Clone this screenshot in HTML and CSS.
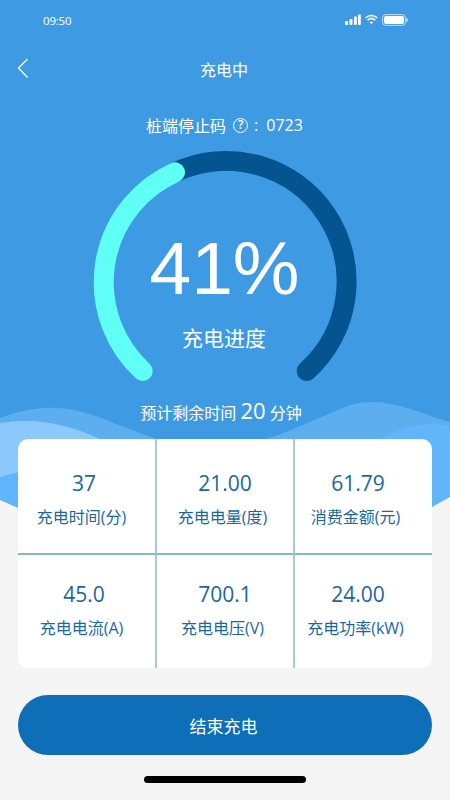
FILE: index.html
```html
<!DOCTYPE html>
<html>
<head>
  <title>充电中</title>
  <meta charset="UTF-8">
  <meta name="viewport" content="width=device-width, initial-scale=1.0">
  <link rel="stylesheet" href="styles.css">
</head>
<body>
  <div class="page">
    <!-- Blue backdrop with waves, sits behind everything -->
    <svg class="backdrop" viewBox="0 0 450 520" width="450" height="520">
      <rect width="450" height="520" fill="#3f9ae4"/>
      <path d="M0 520V418C18 411 38 407 58 408C100 410 130 436 190 447C250 456 300 424 350 405C385 395 415 412 450 422V520Z" fill="#5caeee"/>
      <path d="M0 520V423C35 417 70 424 104 441L200 520ZM450 426C415 421 395 429 365 447L330 520H450Z" fill="#61b5fb"/>
      <path d="M0 423C35 417 70 424 104 441C120 452 60 462 18 472L0 477Z" fill="#8cc8fb"/>
      <path d="M0 520V500L18 508C30 514 40 520 40 520ZM410 520C420 514 426 510 432 507L450 497V520Z" fill="#f5f5f5"/>
    </svg>

    <div class="status-bar">
      <span class="status-time">09:50</span>
      <svg class="status-icons" viewBox="0 0 64 14" width="64" height="14">
        <rect x="1" y="8" width="3" height="4" rx="0.8" fill="#fff"/>
        <rect x="5.5" y="6" width="3" height="6" rx="0.8" fill="#fff"/>
        <rect x="10" y="3.5" width="2.8" height="8.5" rx="0.8" fill="#fff"/>
        <rect x="14" y="1.5" width="2.8" height="10.5" rx="0.8" fill="#fff"/>
        <path d="M21.5 5C25 1.6 29.8 1.6 33.3 5M23.6 7.2C25.9 5 28.9 5 31.2 7.2" fill="none" stroke="#fff" stroke-width="1.6"/>
        <path d="M25.6 9.2C26.7 8.2 28.1 8.2 29.2 9.2L27.4 11Z" fill="#fff"/>
        <rect x="38.6" y="1.6" width="22.8" height="10.8" rx="3" fill="none" stroke="#bfe0f8" stroke-width="1"/>
        <rect x="40" y="3" width="20" height="8" rx="2" fill="#fff"/>
        <rect x="62" y="5" width="1.6" height="4" rx="0.8" fill="#bfe0f8"/>
      </svg>
    </div>

    <div class="nav-bar">
      <svg class="back-icon" viewBox="0 0 12 20" width="12" height="20">
        <path d="M10.5 1L1.5 10L10.5 19.5" fill="none" stroke="#fff" stroke-width="1.3"/>
      </svg>
      <span class="nav-title">充电中</span>
    </div>

    <div class="stop-code">
      <span>桩端停止码</span>
      <span class="help-icon">?</span>
      <span class="colon">:</span>
      <span class="code">0723</span>
    </div>

    <div class="gauge">
      <svg viewBox="0 0 261 230" width="261" height="230">
        <path d="M81 20.3A120.5 120.5 0 0 1 212.7 219" fill="none" stroke="#04548f" stroke-width="20" stroke-linecap="round"/>
        <path d="M48.7 219A120.5 120.5 0 0 1 81 20.3" fill="none" stroke="#5ffff5" stroke-width="20" stroke-linecap="round"/>
      </svg>
      <div class="gauge-text">
        <div class="gauge-value">41%</div>
        <div class="gauge-label">充电进度</div>
      </div>
    </div>

    <div class="remaining">预计剩余时间 <span class="remaining-num">20</span> 分钟</div>

    <div class="data-card">
      <div class="cell">
        <div class="cell-value">37</div>
        <div class="cell-label">充电时间(分)</div>
      </div>
      <div class="cell">
        <div class="cell-value">21.00</div>
        <div class="cell-label">充电电量(度)</div>
      </div>
      <div class="cell">
        <div class="cell-value">61.79</div>
        <div class="cell-label">消费金额(元)</div>
      </div>
      <div class="cell">
        <div class="cell-value">45.0</div>
        <div class="cell-label">充电电流(A)</div>
      </div>
      <div class="cell">
        <div class="cell-value">700.1</div>
        <div class="cell-label">充电电压(V)</div>
      </div>
      <div class="cell">
        <div class="cell-value">24.00</div>
        <div class="cell-label">充电功率(kW)</div>
      </div>
    </div>

    <button class="end-btn">结束充电</button>
    <div class="home-bar"></div>
  </div>
</body>
</html>
```

FILE: styles.css
```css
* {
  box-sizing: border-box;
}
body {
  margin: 0;
  font-family: "Open Sans", "Noto Sans CJK SC", sans-serif;
  background: #f5f5f5;
}
.page {
  position: relative;
  width: 450px;
  height: 800px;
  overflow: hidden;
  color: #fff;
  background: #f5f5f5;
  display: flex;
  flex-direction: column;
  align-items: center;
}
.backdrop {
  position: absolute;
  top: 0;
  left: 0;
}
.status-bar, .nav-bar, .stop-code, .gauge, .remaining, .data-card, .end-btn, .home-bar {
  position: relative;
}

/* Status bar */
.status-bar {
  width: 100%;
  height: 40px;
  padding: 0 42px 0 43px;
  display: flex;
  justify-content: space-between;
  align-items: center;
}
.status-time {
  font-size: 11.5px;
  letter-spacing: -0.2px;
}

/* Nav */
.nav-bar {
  width: 100%;
  height: 58px;
  padding-left: 17px;
  display: flex;
  align-items: center;
}
.back-icon {
  margin-top: -3px;
}
.nav-title {
  position: absolute;
  left: 0;
  right: 2px;
  text-align: center;
  font-size: 16px;
}

/* Stop code */
.stop-code {
  height: 24px;
  margin-top: 15px;
  padding-right: 1px;
  display: flex;
  align-items: center;
  font-size: 16px;
}
.help-icon {
  width: 15px;
  height: 15px;
  margin-left: 7px;
  border: 1.2px solid #fff;
  border-radius: 50%;
  font-size: 12px;
  font-weight: 600;
  line-height: 12.5px;
  text-align: center;
}
.colon {
  margin: 0 8px 0 6px;
}

/* Gauge */
.gauge {
  width: 261px;
  height: 230px;
  margin-top: 15px;
  margin-right: 1px;
}
.gauge svg {
  display: block;
  overflow: visible;
}
.gauge-text {
  position: absolute;
  top: 78px;
  left: 0;
  right: 0;
  text-align: center;
}
.gauge-value {
  font-family: "Liberation Sans", sans-serif;
  font-size: 75px;
  line-height: 76px;
}
.gauge-label {
  margin-top: 17px;
  padding-right: 1px;
  font-size: 21px;
  line-height: 30px;
}

.remaining {
  height: 30px;
  margin-top: 13px;
  margin-right: 8px;
  font-size: 16px;
  line-height: 30px;
}
.remaining-num {
  font-size: 22px;
}

/* Data card */
.data-card {
  width: 414px;
  height: 229px;
  margin-top: 14px;
  background: #fff;
  border-radius: 10px;
  overflow: hidden;
  display: grid;
  grid-template-columns: 139px 138px 137px;
  grid-template-rows: 116px 113px;
  color: #17689f;
}
.cell {
  padding-top: 28px;
  text-align: center;
  border-right: 2px solid #a6c8e2;
}
.cell:nth-child(3n+1) {
  padding-right: 5px;
}
.cell:nth-child(3n) {
  padding-right: 11px;
  border-right: none;
}
.cell:nth-child(-n+3) {
  border-bottom: 2px solid #86b5da;
}
.cell:nth-child(n+4) {
  padding-top: 23px;
}
.cell-value {
  font-size: 21px;
  line-height: 32px;
}
.cell-label {
  margin-top: 6px;
  padding-right: 5px;
  font-size: 16px;
  line-height: 24px;
  white-space: nowrap;
}

.end-btn {
  width: 414px;
  height: 60px;
  margin-top: 27px;
  padding: 0 3px 0 0;
  border: none;
  border-radius: 30px;
  background: #0f6eb8;
  color: #fff;
  font-family: "Open Sans", "Noto Sans CJK SC", sans-serif;
  font-size: 17px;
}
.home-bar {
  width: 162px;
  height: 7px;
  margin-top: 21px;
  border-radius: 4px;
  background: #000;
}
```
